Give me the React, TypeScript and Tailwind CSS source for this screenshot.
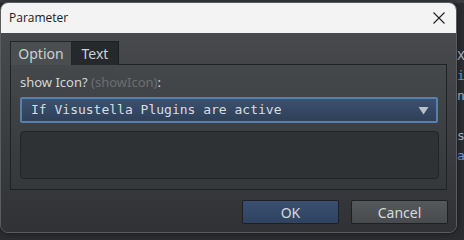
import React from "react";

export default function App() {
  return (
    <div className="relative w-[464px] h-[240px] overflow-hidden bg-[#2b2d30]" style={{ fontFamily: '"Noto Sans", "Open Sans", sans-serif' }}>
      {/* background editor fragments */}
      <div className="absolute left-0 top-0 w-[464px] h-[3px] bg-[#3a3c3f]" />
      <div className="absolute left-[457px] top-[46px] w-[7px] overflow-hidden flex flex-col text-[13px] leading-[20px] text-[#a9b7c6]" style={{ fontFamily: '"DejaVu Sans Mono", monospace' }}>
        <span>X</span>
        <span className="text-[#6a9fd0]">i</span>
        <span>n</span>
        <span className="mt-[20px]">s</span>
        <span className="text-[#6a9fd0]">a</span>
      </div>

      {/* dialog */}
      <div className="absolute left-0 top-[2px] w-[457px] h-[231px] rounded-[8px] overflow-hidden border border-[#5a5d60] flex flex-col shadow-[0_0_6px_rgba(0,0,0,0.5)]">
        <div className="h-[30px] shrink-0 bg-[#f3f3f3] flex items-center justify-between pl-[8px] pr-[9px]">
          <span className="text-[12px] text-[#1a1a1a]" style={{ fontFamily: '"Open Sans", "Noto Sans", sans-serif' }}>Parameter</span>
          <svg width="14" height="14" viewBox="0 0 14 14" className="mr-[1px]">
            <path d="M1.5 1.5 L12.5 12.5 M12.5 1.5 L1.5 12.5" stroke="#222" strokeWidth="1.1" fill="none" />
          </svg>
        </div>
        <div className="flex-1 flex flex-col px-[9px] pt-[8px] bg-gradient-to-b from-[#47494c] to-[#303235]">
          {/* tabs */}
          <div className="flex h-[24px] items-end">
            <div className="w-[62px] h-[24px] bg-[#4b4e51] border border-b-0 border-[#232527] flex items-center justify-center text-[14px] text-[#ccd0d4]">Option</div>
            <div className="w-[47px] h-[24px] bg-[#26292c] border border-b-0 border-l-0 border-[#1c1e20] flex items-center justify-center text-[14px] text-[#ccd0d4]">Text</div>
            <div className="flex-1 border-b border-[#1f2123]" />
          </div>
          {/* panel */}
          <div className="h-[125px] border border-t-0 border-[#1f2123] px-[9px] pt-[8px] flex flex-col bg-gradient-to-b from-[#45484b] to-[#35383b]">
            <div className="text-[13px] leading-[18px] text-[#d2d5d8]">
              show Icon? <span className="text-[#6b6e71]">(showIcon)</span>:
            </div>
            <div className="mt-[6px] h-[26px] w-[418px] rounded-[2px] border-2 border-[#5680ad] bg-gradient-to-b from-[#3b5170] to-[#2f4058] flex items-center justify-between pl-[9px] pr-[7px]">
              <span className="text-[13px] text-[#d8dde2]" style={{ fontFamily: '"DejaVu Sans Mono", monospace' }}>If Visustella Plugins are active</span>
              <svg width="11" height="9" viewBox="0 0 11 9"><path d="M0.5 1 L10.5 1 L5.5 8.5 Z" fill="#b9c0c7" /></svg>
            </div>
            <div className="mt-[8px] h-[48px] w-[419px] rounded-[4px] border border-[#222426] bg-[#2f3235]" />
          </div>
          {/* buttons */}
          <div className="flex justify-end gap-[12px] mt-[10px] mr-[-1px]">
            <div className="w-[97px] h-[24px] rounded-[2px] border border-[#1e2022] bg-gradient-to-b from-[#3a5071] to-[#2f4260] flex items-center justify-center text-[14px] text-[#d4d9de]">OK</div>
            <div className="w-[97px] h-[24px] rounded-[2px] border border-[#1e2022] bg-gradient-to-b from-[#56595c] to-[#484b4e] flex items-center justify-center text-[14px] text-[#d4d9de]">Cancel</div>
          </div>
        </div>
      </div>
    </div>
  );
}
